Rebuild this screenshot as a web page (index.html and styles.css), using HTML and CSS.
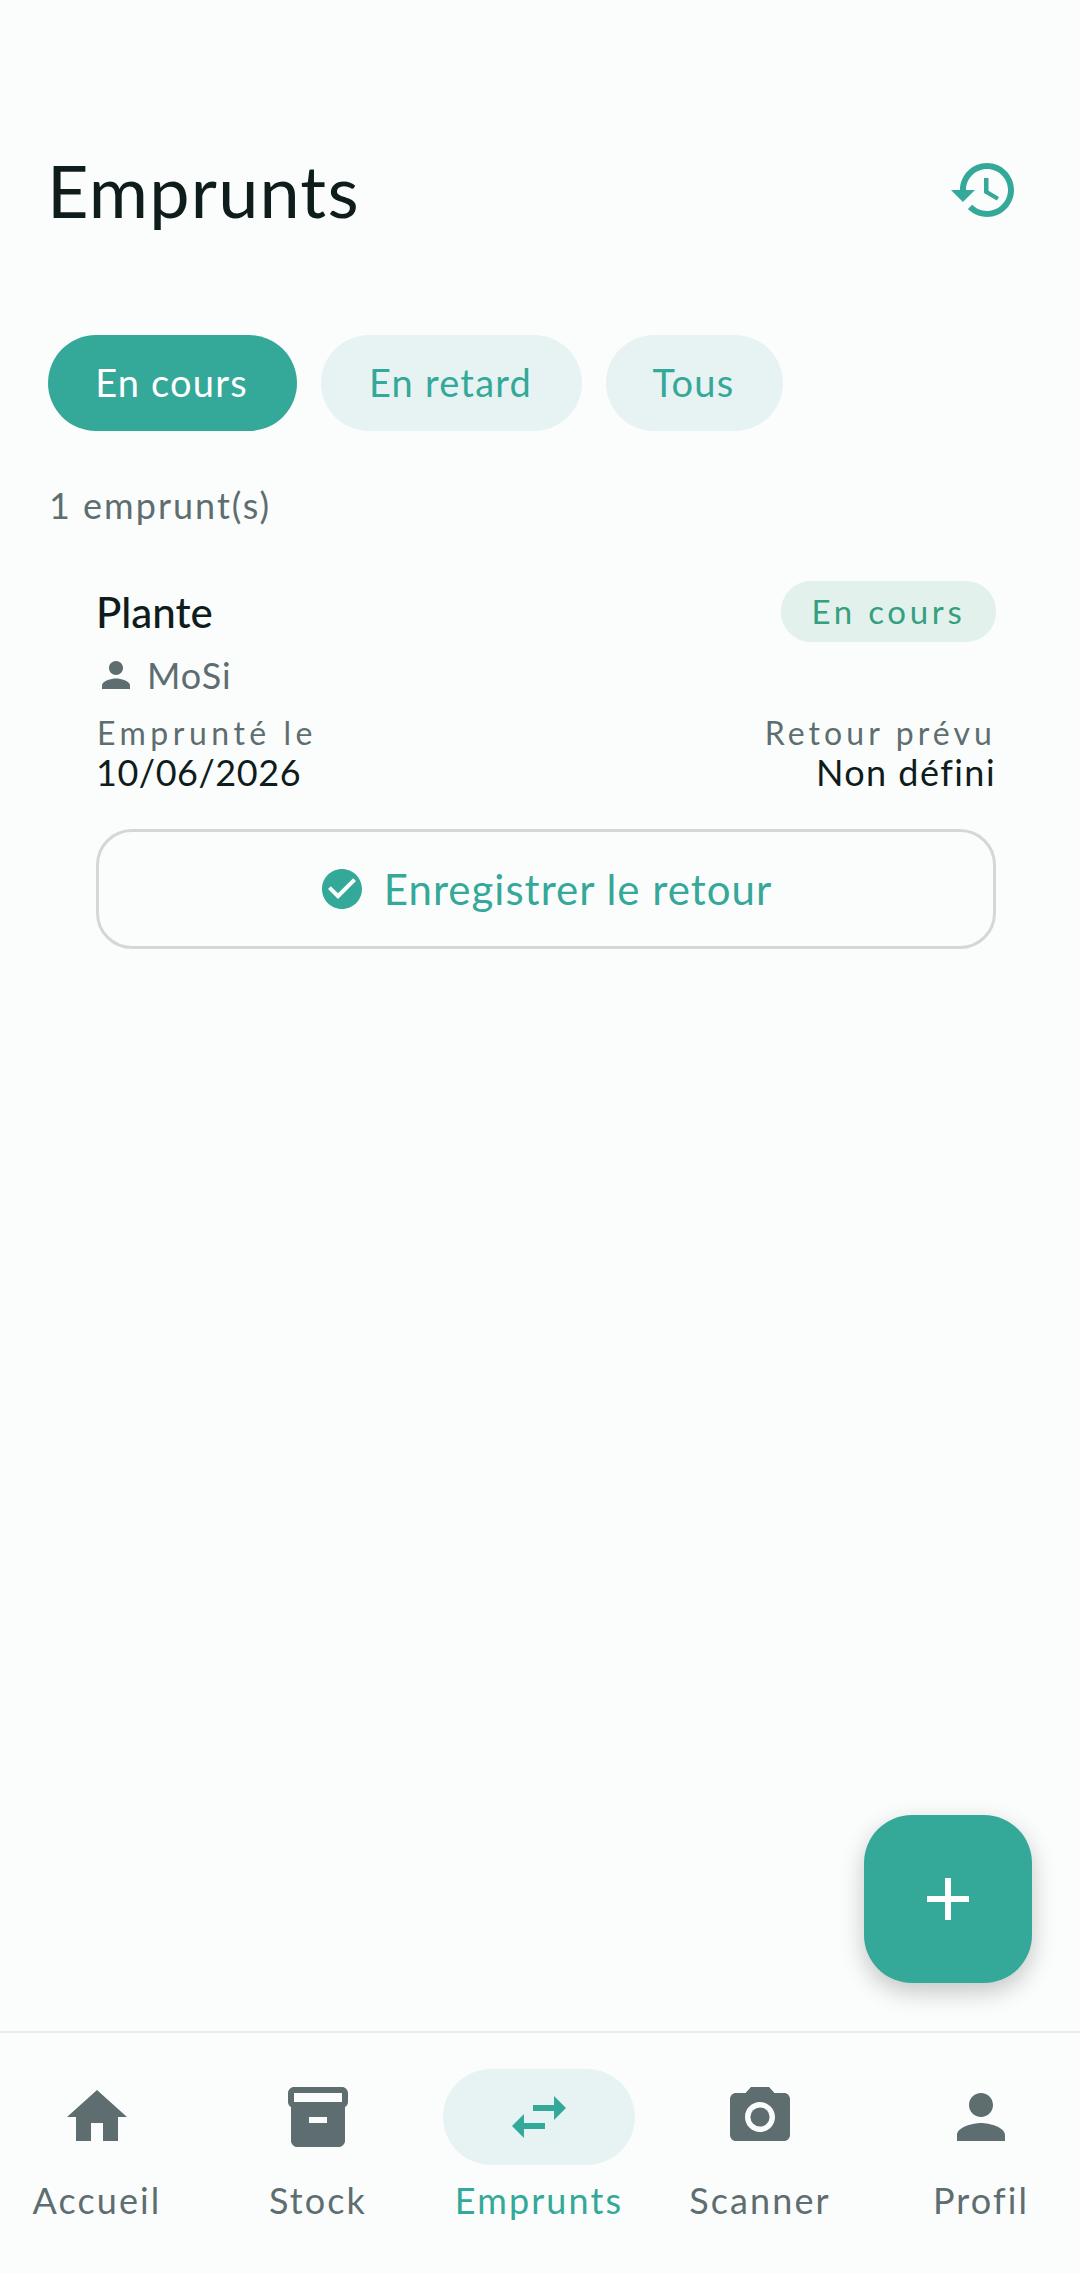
FILE: index.html
```html
<!DOCTYPE html>
<html>
<head>
    <title>Emprunts</title>
    <link rel="stylesheet" href="styles.css">
</head>
<body>
    <div class="screen">
        <div class="content">
            <div class="header">
                <h1>Emprunts</h1>
                <svg class="history-icon" viewBox="0 0 24 24"><path d="M13 3c-4.97 0-9 4.03-9 9H1l3.89 3.89.07.14L9 12H6c0-3.87 3.13-7 7-7s7 3.13 7 7-3.13 7-7 7c-1.93 0-3.68-.79-4.94-2.06l-1.42 1.42C8.27 19.99 10.51 21 13 21c4.97 0 9-4.03 9-9s-4.03-9-9-9zm-1 5v5l4.28 2.54.72-1.21-3.5-2.08V8H12z"/></svg>
            </div>

            <div class="filters">
                <div class="chip active">En cours</div>
                <div class="chip chip-late">En retard</div>
                <div class="chip chip-all">Tous</div>
            </div>

            <div class="count">1 emprunt(s)</div>

            <div class="card">
                <div class="card-top">
                    <span class="card-title">Plante</span>
                    <span class="badge">En cours</span>
                </div>
                <div class="card-user">
                    <svg class="user-icon" viewBox="0 0 24 24"><path d="M12 12c2.21 0 4-1.79 4-4s-1.79-4-4-4-4 1.79-4 4 1.79 4 4 4zm0 2c-2.67 0-8 1.34-8 4v2h16v-2c0-2.66-5.33-4-8-4z"/></svg>
                    <span>MoSi</span>
                </div>
                <div class="dates">
                    <div>
                        <div class="date-label">Emprunté le</div>
                        <div class="date-value">10/06/2026</div>
                    </div>
                    <div class="date-right">
                        <div class="date-label">Retour prévu</div>
                        <div class="date-value">Non défini</div>
                    </div>
                </div>
                <div class="return-btn">
                    <svg class="check-icon" viewBox="0 0 24 24"><path d="M12 2C6.48 2 2 6.48 2 12s4.48 10 10 10 10-4.48 10-10S17.52 2 12 2zm-2 15l-5-5 1.41-1.41L10 14.17l7.59-7.59L19 8l-9 9z"/></svg>
                    <span>Enregistrer le retour</span>
                </div>
            </div>

            <div class="fab">
                <svg class="fab-icon" viewBox="0 0 24 24"><path d="M19 13h-6v6h-2v-6H5v-2h6V5h2v6h6v2z"/></svg>
            </div>
        </div>

        <div class="bottom-nav">
            <div class="nav-item">
                <div class="nav-pill"><svg viewBox="0 0 24 24"><path d="M10 20v-6h4v6h5v-8h3L12 3 2 12h3v8z"/></svg></div>
                <span>Accueil</span>
            </div>
            <div class="nav-item">
                <div class="nav-pill"><svg viewBox="0 0 24 24"><path d="M20 2H4c-1 0-2 .9-2 2v3.01c0 .72.43 1.34 1 1.69V20c0 1.1 1.1 2 2 2h14c.9 0 2-.9 2-2V8.7c.57-.35 1-.97 1-1.69V4c0-1.1-1-2-2-2zm-5 12H9v-2h6v2zm5-7H4V4l16-.02V7z"/></svg></div>
                <span>Stock</span>
            </div>
            <div class="nav-item selected">
                <div class="nav-pill"><svg viewBox="0 0 24 24"><path d="M6.99 11L3 15l3.99 4v-3H14v-2H6.99v-3zM21 9l-3.99-4v3H10v2h7.01v3L21 9z"/></svg></div>
                <span>Emprunts</span>
            </div>
            <div class="nav-item">
                <div class="nav-pill"><svg viewBox="0 0 24 24"><circle cx="12" cy="12" r="3.2"/><path d="M9 2L7.17 4H4c-1.1 0-2 .9-2 2v12c0 1.1.9 2 2 2h16c1.1 0 2-.9 2-2V6c0-1.1-.9-2-2-2h-3.17L15 2H9zm3 15c-2.76 0-5-2.24-5-5s2.24-5 5-5 5 2.24 5 5-2.24 5-5 5z"/></svg></div>
                <span>Scanner</span>
            </div>
            <div class="nav-item">
                <div class="nav-pill"><svg viewBox="0 0 24 24"><path d="M12 12c2.21 0 4-1.79 4-4s-1.79-4-4-4-4 1.79-4 4 1.79 4 4 4zm0 2c-2.67 0-8 1.34-8 4v2h16v-2c0-2.66-5.33-4-8-4z"/></svg></div>
                <span>Profil</span>
            </div>
        </div>
    </div>
</body>
</html>
```

FILE: styles.css
```css
body {
    margin: 0;
    padding: 0;
    font-family: Lato, "Noto Sans", sans-serif;
    background-color: #fbfdfc;
    color: #0f1c1c;
}

.screen {
    width: 1080px;
    height: 2273px;
    display: flex;
    flex-direction: column;
    overflow: hidden;
}

.content {
    flex: 1;
    position: relative;
    padding-top: 142px;
}

/* Header */
.header {
    height: 96px;
    padding: 0 60px 0 47px;
    display: flex;
    align-items: center;
    justify-content: space-between;
}

.header h1 {
    margin: 0;
    font-size: 72px;
    font-weight: 400;
    line-height: 98px;
    letter-spacing: 1.2px;
}

.history-icon {
    width: 72px;
    height: 72px;
    fill: #34a899;
}

/* Filter chips */
.filters {
    margin-top: 97px;
    padding: 0 48px;
    display: flex;
    gap: 24px;
}

.chip {
    height: 96px;
    box-sizing: border-box;
    padding-right: 2px;
    border-radius: 48px;
    background-color: #e7f3f3;
    color: #34a899;
    font-size: 38px;
    line-height: 94px;
    letter-spacing: 1.2px;
    text-align: center;
}

.chip.active {
    width: 249px;
    background-color: #34a899;
    color: #fff;
}

.chip-late {
    width: 261px;
}

.chip-all {
    width: 177px;
}

.count {
    margin-top: 50px;
    padding-left: 49px;
    font-size: 36px;
    line-height: 48px;
    letter-spacing: 2px;
    color: #5e6e70;
}

/* Loan card */
.card {
    margin: 52px 84px 0 96px;
}

.card-top {
    display: flex;
    align-items: center;
    justify-content: space-between;
    height: 61px;
}

.card-title {
    font-size: 42px;
    font-weight: 500;
}

.badge {
    width: 215px;
    height: 61px;
    border-radius: 30px;
    background-color: #e2f1ec;
    color: #34a080;
    font-size: 33px;
    line-height: 61px;
    letter-spacing: 3.7px;
    text-align: center;
}

.card-user {
    margin-top: 12px;
    height: 42px;
    display: flex;
    align-items: center;
    gap: 10px;
    color: #5e6e70;
    font-size: 36px;
    letter-spacing: 1px;
}

.user-icon {
    width: 42px;
    height: 42px;
    margin-left: -1px;
    fill: #5e6e70;
}

.dates {
    margin-top: 17px;
    display: flex;
    justify-content: space-between;
}

.date-right {
    text-align: right;
}

.date-label {
    padding-left: 1px;
    font-size: 32px;
    line-height: 40px;
    letter-spacing: 4.5px;
    color: #5e6e70;
}

.date-value {
    font-size: 36px;
    line-height: 38px;
    letter-spacing: 0.55px;
}

.date-right .date-label {
    letter-spacing: 4.1px;
}

.date-right .date-value {
    letter-spacing: 1.45px;
}

.return-btn {
    margin-top: 38px;
    height: 120px;
    box-sizing: border-box;
    padding-right: 2px;
    border: 3px solid #d4d7d7;
    border-radius: 36px;
    display: flex;
    align-items: center;
    justify-content: center;
    gap: 18px;
    color: #34a899;
    font-size: 42px;
    letter-spacing: 1px;
}

.check-icon {
    width: 48px;
    height: 48px;
    fill: #34a899;
}

/* Floating button */
.fab {
    position: absolute;
    right: 48px;
    bottom: 48px;
    width: 168px;
    height: 168px;
    border-radius: 48px;
    background-color: #34a899;
    box-shadow: 0 9px 24px rgba(0, 0, 0, 0.22);
    display: flex;
    align-items: center;
    justify-content: center;
}

.fab-icon {
    width: 72px;
    height: 72px;
    fill: #fff;
}

/* Bottom navigation */
.bottom-nav {
    height: 242px;
    box-sizing: border-box;
    border-top: 2px solid #e8ecec;
    padding: 36px 2px 0 0;
    display: flex;
    justify-content: center;
    gap: 29px;
}

.nav-item {
    width: 192px;
    display: flex;
    flex-direction: column;
    align-items: center;
    color: #5e6e70;
    font-size: 36px;
    line-height: 48px;
    letter-spacing: 2.1px;
    white-space: nowrap;
}

.nav-pill {
    width: 192px;
    height: 96px;
    border-radius: 48px;
    margin-bottom: 11px;
    display: flex;
    align-items: center;
    justify-content: center;
}

.nav-pill svg {
    width: 72px;
    height: 72px;
    fill: #5e6e70;
}

.nav-item.selected {
    color: #34a899;
}

.selected .nav-pill {
    background-color: #e7f3f3;
}

.selected .nav-pill svg {
    fill: #34a899;
}
```
